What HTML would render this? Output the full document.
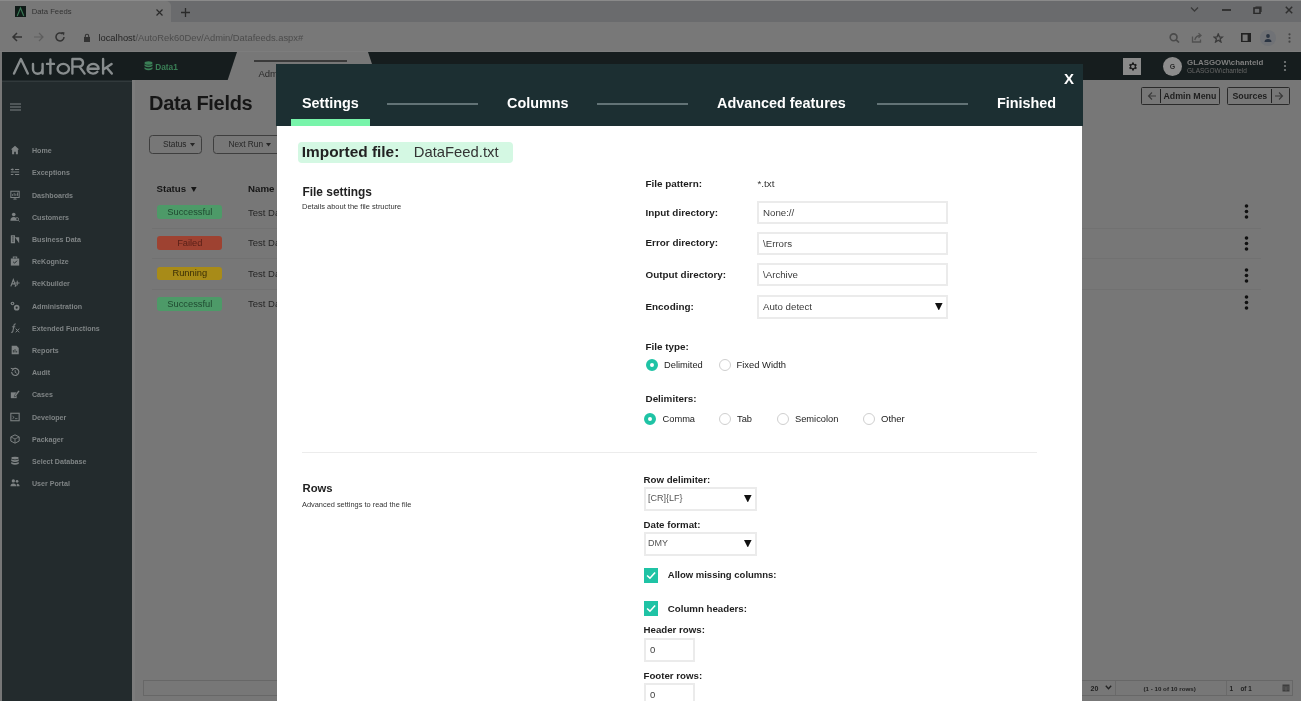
<!DOCTYPE html>
<html><head><meta charset="utf-8">
<style>
*{box-sizing:border-box;margin:0;padding:0}
html,body{width:1301px;height:701px;overflow:hidden;background:#777777;font-family:"Liberation Sans",sans-serif;position:relative}
.a{position:absolute;white-space:nowrap}
/* browser chrome */
#tabstrip{left:0;top:0;width:1301px;height:22px;background:#6a6b6d;border-top:1px solid #8a8a8a}
#tab{left:0;top:1px;width:171px;height:21px;background:#787878;border-radius:0 5px 0 0}
#toolbar{left:0;top:22px;width:1301px;height:30px;background:#787878}
/* app header */
#hdr{left:2px;top:52px;width:1299px;height:28px;background:#161d1e}
#side{left:2px;top:80px;width:129.5px;height:621px;background:#232b2d}
.sb{position:absolute;left:32px;font-size:8px;color:#7f8485;font-weight:bold;white-space:nowrap}
.sbi{position:absolute;left:9px;width:12px;height:12px}
/* modal */
#modal{left:277px;top:64px;width:805px;height:640px;background:#fff}
#mh{left:-1px;top:0;width:807px;height:62px;background:#1c2f32}
.tabt{position:absolute;top:28.5px;font-size:14.4px;font-weight:bold;color:#fff;white-space:nowrap;line-height:20px}
.tline{position:absolute;top:39px;height:2px;background:#627376}
.lbl{position:absolute;font-size:10px;font-weight:bold;color:#1e1e1e;white-space:nowrap;line-height:12px}
.inp{position:absolute;border:2px solid #ebebeb;background:#fff;font-size:9.7px;color:#3c3c3c;line-height:19px;padding-left:4px;white-space:nowrap}
.rad{position:absolute;width:12px;height:12px;border-radius:50%;border:1px solid #cfcfcf;background:#fff}
.rad.on{border:4.2px solid #1fc3a5}
.rt{position:absolute;font-size:10px;color:#222;white-space:nowrap;line-height:12px}
.chk{position:absolute;width:14.4px;height:14.8px;background:#1fc3a5}
</style></head><body><div id="root" style="position:absolute;left:0;top:0;width:1301px;height:701px;overflow:hidden;will-change:transform">
<div id="tabstrip" class="a"></div>
<div id="tab" class="a"></div>
<div id="toolbar" class="a"></div>

<!-- favicon -->
<div class="a" style="left:15px;top:6px;width:11px;height:11px;background:#0f1a17"><svg width="11" height="11" viewBox="0 0 11 11" style="display:block"><path d="M2.2 10 L5.5 2 L8.8 10" fill="none" stroke="#3a7a56" stroke-width="1.1"/></svg></div>
<div class="a" style="left:31.8px;top:5.5px;font-size:7.7px;color:#333;line-height:12px">Data Feeds</div>
<svg class="a" style="left:155px;top:7.5px" width="9" height="9" viewBox="0 0 9 9"><path d="M1.5 1.5 L7.5 7.5 M7.5 1.5 L1.5 7.5" stroke="#2a2a2a" stroke-width="1.2"/></svg>
<svg class="a" style="left:179.5px;top:6.5px" width="11" height="11" viewBox="0 0 11 11"><path d="M5.5 1 V10 M1 5.5 H10" stroke="#2a2a2a" stroke-width="1.3"/></svg>
<!-- window controls -->
<svg class="a" style="left:1190px;top:6px" width="9" height="7" viewBox="0 0 9 7"><path d="M1 1.5 L4.5 5 L8 1.5" fill="none" stroke="#3a3a3a" stroke-width="1.3"/></svg>
<div class="a" style="left:1222px;top:9px;width:8.7px;height:1.6px;background:#333"></div>
<svg class="a" style="left:1252.5px;top:5.5px" width="9" height="8.5" viewBox="0 0 9 8.5"><rect x="1" y="2" width="6" height="5.5" fill="none" stroke="#2a2a2a" stroke-width="1.6"/><path d="M2.5 1 H8 V6" fill="none" stroke="#2a2a2a" stroke-width="1.2"/></svg>
<svg class="a" style="left:1284.5px;top:5.5px" width="8" height="8" viewBox="0 0 8 8"><path d="M0.8 0.8 L7.2 7.2 M7.2 0.8 L0.8 7.2" stroke="#2e2e2e" stroke-width="1.5"/></svg>
<!-- nav -->
<svg class="a" style="left:10.5px;top:31px" width="12" height="12" viewBox="0 0 12 12"><path d="M11 6 H2 M6 2 L2 6 L6 10" fill="none" stroke="#333" stroke-width="1.5"/></svg>
<svg class="a" style="left:32.5px;top:31px" width="12" height="12" viewBox="0 0 12 12"><path d="M1 6 H10 M6 2 L10 6 L6 10" fill="none" stroke="#5e5e5e" stroke-width="1.2"/></svg>
<svg class="a" style="left:54px;top:31px" width="12" height="12" viewBox="0 0 12 12"><path d="M10 6 A4 4 0 1 1 8.5 2.8" fill="none" stroke="#333" stroke-width="1.5"/><path d="M7 1 L10.5 1.2 L10 4.5 Z" fill="#333"/></svg>
<svg class="a" style="left:83px;top:32.5px" width="8" height="9" viewBox="0 0 8 9"><rect x="1" y="4" width="6" height="5" fill="#333"/><path d="M2.3 4.5 V3 A1.7 1.7 0 0 1 5.7 3 V4.5" fill="none" stroke="#333" stroke-width="1.1"/></svg>
<div class="a" style="left:98.4px;top:31.5px;font-size:9.4px;color:#4c4c4c;line-height:12px"><span style="color:#262626">localhost</span>/AutoRek60Dev/Admin/Datafeeds.aspx#</div>
<!-- right toolbar icons -->
<svg class="a" style="left:1169px;top:32.5px" width="11" height="10" viewBox="0 0 11 10"><circle cx="4.6" cy="4.3" r="3.4" fill="none" stroke="#4a4a4a" stroke-width="1.6"/><path d="M7.2 6.8 L10 9.5" stroke="#4a4a4a" stroke-width="1.7"/></svg>
<svg class="a" style="left:1191px;top:32px" width="12" height="11" viewBox="0 0 12 11"><path d="M1.5 4.5 V10 H9.5 V7.5" fill="none" stroke="#505050" stroke-width="1.3"/><path d="M3.8 8 Q4.8 3.5 9.5 3.5 M7.5 1.3 L10 3.5 L7.5 5.7" fill="none" stroke="#505050" stroke-width="1.3"/></svg>
<svg class="a" style="left:1213px;top:32.5px" width="10.5" height="10" viewBox="0 0 13 13"><path d="M6.5 1.2 L8 5 L12 5.2 L8.9 7.7 L10 11.7 L6.5 9.4 L3 11.7 L4.1 7.7 L1 5.2 L5 5 Z" fill="none" stroke="#3a3a3a" stroke-width="1.7"/></svg>
<svg class="a" style="left:1240.5px;top:32.5px" width="10" height="9.5" viewBox="0 0 10 9.5"><rect x="0.8" y="0.8" width="8.4" height="7.9" fill="none" stroke="#222" stroke-width="1.6"/><rect x="6.6" y="0.8" width="2.6" height="7.9" fill="#222"/></svg>
<div class="a" style="left:1259.5px;top:29.5px;width:16px;height:16px;border-radius:50%;background:#707276"></div>
<svg class="a" style="left:1262.5px;top:32.5px" width="10" height="10" viewBox="0 0 10 10"><circle cx="5" cy="3" r="1.9" fill="#2a3442"/><path d="M1.5 9 Q1.5 6 5 6 Q8.5 6 8.5 9 Z" fill="#2a3442"/></svg>
<svg class="a" style="left:1286.5px;top:33px" width="5" height="10" viewBox="0 0 5 10"><circle cx="2.5" cy="1.3" r="1.1" fill="#444"/><circle cx="2.5" cy="5" r="1.1" fill="#444"/><circle cx="2.5" cy="8.7" r="1.1" fill="#444"/></svg>
<div class="a" style="left:0;top:51px;width:1301px;height:1px;background:#7d7d7d"></div>
<div class="a" style="left:2px;top:52px;width:1299px;height:28px;background:#777"></div>
<svg class="a" style="left:2px;top:52px" width="1299" height="28" viewBox="0 0 1299 28"><path d="M0 0 H235 L225.7 28 H0 Z" fill="#161d1e"/><path d="M366 0 H1299 V28 H375.3 Z" fill="#161d1e"/></svg>
<div class="a" style="left:254px;top:60px;width:93px;height:2px;background:#3a3a3a"></div>
<div class="a" style="left:258.5px;top:67.5px;font-size:9.5px;color:#2a2a2a;line-height:12px">Admin</div>
<!-- logo -->
<svg class="a" style="left:10px;top:54px" width="105" height="26" viewBox="0 0 105 26"><g fill="none" stroke="#888d8e" stroke-width="2.4" stroke-linecap="round" stroke-linejoin="round">
<path d="M4 19.6 L10.9 5 L17.8 19.6"/>
<path d="M23 9.9 V15.3 A4.6 4.4 0 0 0 32.4 15.3 M32.6 9.9 V19.6"/>
<path d="M40.4 5.4 V19.6 M37 9.9 H44"/>
<ellipse cx="53.3" cy="14.75" rx="5.7" ry="4.85"/>
<path d="M62.4 19.6 V5 H70 A3.9 3.9 0 0 1 70 12.6 H62.4 M69.5 12.6 L74.6 19.6"/>
<path d="M77.6 14.7 H88.6 A5.5 4.85 0 1 0 87.4 17.8"/>
<path d="M93.1 5 V19.6 M93.4 15.6 L101.6 9.9 M96.6 13.4 L101.8 19.6"/>
</g></svg>
<!-- Data1 -->
<svg class="a" style="left:143.5px;top:61px" width="9" height="10" viewBox="0 0 9 10"><ellipse cx="4.5" cy="2" rx="4" ry="1.8" fill="#3a7f56"/><path d="M0.5 3.2 V5 Q4.5 7.5 8.5 5 V3.2 Q4.5 5.6 0.5 3.2Z M0.5 6.2 V8 Q4.5 10.5 8.5 8 V6.2 Q4.5 8.6 0.5 6.2Z" fill="#3a7f56"/></svg>
<div class="a" style="left:155.2px;top:60.5px;font-size:8.3px;font-weight:bold;color:#3a7f56;line-height:12px">Data1</div>
<!-- gear -->
<div class="a" style="left:1123px;top:57.5px;width:18px;height:17.5px;background:#8a8a8a"></div>
<svg class="a" style="left:1126.5px;top:60.5px" width="11" height="11" viewBox="0 0 24 24"><path fill="#1b1b1b" d="M19.4 13a7.5 7.5 0 0 0 0-2l2.1-1.6-2-3.5-2.5 1a7.6 7.6 0 0 0-1.7-1L15 3.2h-4l-.4 2.7a7.6 7.6 0 0 0-1.7 1l-2.5-1-2 3.5L6.6 11a7.5 7.5 0 0 0 0 2l-2.1 1.6 2 3.5 2.5-1a7.6 7.6 0 0 0 1.7 1l.4 2.7h4l.4-2.7a7.6 7.6 0 0 0 1.7-1l2.5 1 2-3.5zM13 16a4 4 0 1 1 0-8 4 4 0 0 1 0 8z"/></svg>
<!-- avatar -->
<div class="a" style="left:1163.3px;top:57.3px;width:19px;height:19px;border-radius:50%;background:#8c8c8c"></div>
<div class="a" style="left:1169.8px;top:61.8px;font-size:7px;font-weight:bold;color:#2a2a2a;line-height:10px">G</div>
<div class="a" style="left:1187px;top:57.5px;font-size:7.9px;font-weight:bold;color:#7f7f7f;line-height:10px">GLASGOW\chanteld</div>
<div class="a" style="left:1187px;top:67px;font-size:6.5px;color:#676767;line-height:8px">GLASGOW\chanteld</div>
<svg class="a" style="left:1283px;top:59.5px" width="4" height="12" viewBox="0 0 4 12"><circle cx="2" cy="2" r="1.1" fill="#7c8080"/><circle cx="2" cy="6" r="1.1" fill="#7c8080"/><circle cx="2" cy="10" r="1.1" fill="#7c8080"/></svg>

<div id="side" class="a"></div>
<div class="a" style="left:131.5px;top:80px;width:3.5px;height:621px;background:#7c7c7c"></div>
<div class="a" style="left:2px;top:81px;width:129.5px;height:1px;background:#323a3c"></div>
<svg class="a" style="left:10px;top:102.5px" width="11" height="8" viewBox="0 0 11 8"><path d="M0 1 H11 M0 4 H11 M0 7 H11" stroke="#7d8283" stroke-width="1.2"/></svg>
<svg class="a" style="left:10px;top:145.0px" width="10" height="10" viewBox="0 0 12 12"><path d="M6 1 L11 5.5 H9.5 V11 H7 V8 H5 V11 H2.5 V5.5 H1 Z" fill="#7d8283"/></svg>
<div class="sb" style="top:145.8px;line-height:10px;font-size:7.1px">Home</div>
<svg class="a" style="left:10px;top:167.0px" width="10" height="10" viewBox="0 0 12 12"><path d="M1 3 H4 M6 3 H11 M1 6 H11 M1 9 H4 M6 9 H11" stroke="#7d8283" stroke-width="1.2"/><circle cx="3" cy="3" r="1.3" fill="#7d8283"/></svg>
<div class="sb" style="top:167.8px;line-height:10px;font-size:7.1px">Exceptions</div>
<svg class="a" style="left:10px;top:190.0px" width="10" height="10" viewBox="0 0 12 12"><rect x="1" y="1.5" width="10" height="7.5" fill="none" stroke="#7d8283" stroke-width="1.2"/><path d="M3 7 V5 M5 7 V3.5 M7 7 V4.5 M9 7 V3" stroke="#7d8283"/><path d="M4 11 H8 M6 9 V11" stroke="#7d8283"/></svg>
<div class="sb" style="top:190.8px;line-height:10px;font-size:7.1px">Dashboards</div>
<svg class="a" style="left:10px;top:212.0px" width="10" height="10" viewBox="0 0 12 12"><circle cx="4.5" cy="3" r="2.2" fill="#7d8283"/><path d="M0.5 10.5 Q0.5 6 4.5 6 Q6.5 6 7.5 7.5 V10.5 Z" fill="#7d8283"/><circle cx="8.5" cy="8.5" r="1.8" fill="none" stroke="#7d8283" stroke-width="1"/><path d="M9.8 9.8 L11.5 11.5" stroke="#7d8283" stroke-width="1"/></svg>
<div class="sb" style="top:212.8px;line-height:10px;font-size:7.1px">Customers</div>
<svg class="a" style="left:10px;top:234.0px" width="10" height="10" viewBox="0 0 12 12"><path d="M1 11 V1.5 H6 V11 M6 4 H11 V11 Z" fill="#7d8283"/><path d="M2.5 3.5 H4.5 M2.5 6 H4.5 M2.5 8.5 H4.5" stroke="#232b2d" stroke-width="1"/></svg>
<div class="sb" style="top:234.8px;line-height:10px;font-size:7.1px">Business Data</div>
<svg class="a" style="left:10px;top:256.0px" width="10" height="10" viewBox="0 0 12 12"><rect x="1" y="3" width="10" height="8.5" fill="#7d8283"/><path d="M4 3 V1.2 H8 V3" fill="none" stroke="#7d8283" stroke-width="1.3"/><path d="M3.8 7 L5.5 8.6 L8.4 5.6" fill="none" stroke="#232b2d" stroke-width="1.2"/></svg>
<div class="sb" style="top:256.8px;line-height:10px;font-size:7.1px">ReKognize</div>
<svg class="a" style="left:10px;top:278.0px" width="10" height="10" viewBox="0 0 12 12"><path d="M1 10 L4 2 L7 10 M2.2 7 H5.8" fill="none" stroke="#7d8283" stroke-width="1.4"/><path d="M6 6 H11.5 M8.7 3.2 V8.8 M6 10.5 L8 8" stroke="#7d8283" stroke-width="1.2"/></svg>
<div class="sb" style="top:278.8px;line-height:10px;font-size:7.1px">ReKbuilder</div>
<svg class="a" style="left:10px;top:301.0px" width="10" height="10" viewBox="0 0 12 12"><circle cx="3" cy="3" r="2.2" fill="#7d8283"/><circle cx="3" cy="3" r="0.8" fill="#232b2d"/><circle cx="8" cy="8" r="3.4" fill="#7d8283"/><circle cx="8" cy="8" r="1.3" fill="#232b2d"/></svg>
<div class="sb" style="top:301.8px;line-height:10px;font-size:7.1px">Administration</div>
<svg class="a" style="left:10px;top:323.0px" width="10" height="10" viewBox="0 0 12 12"><path d="M7 1.2 Q5.2 0.8 4.8 2.8 L3.4 10 Q3 11.6 1.3 11" fill="none" stroke="#7d8283" stroke-width="1.3"/><path d="M2.3 4.6 H6.3" stroke="#7d8283" stroke-width="1.1"/><path d="M6.8 6.8 L11 11.2 M11 6.8 L6.8 11.2" stroke="#7d8283" stroke-width="1.2"/></svg>
<div class="sb" style="top:323.8px;line-height:10px;font-size:7.1px">Extended Functions</div>
<svg class="a" style="left:10px;top:345.0px" width="10" height="10" viewBox="0 0 12 12"><path d="M2 1 H8 L10.5 3.5 V11 H2 Z" fill="#7d8283"/><path d="M4 6 V9 M6 5 V9 M8 7 V9" stroke="#232b2d" stroke-width="1"/></svg>
<div class="sb" style="top:345.8px;line-height:10px;font-size:7.1px">Reports</div>
<svg class="a" style="left:10px;top:367.0px" width="10" height="10" viewBox="0 0 12 12"><path d="M2 6 A4.3 4.3 0 1 0 3.3 2.8" fill="none" stroke="#7d8283" stroke-width="1.4"/><path d="M1 1.5 L3.8 2.4 L2.4 5" fill="none" stroke="#7d8283" stroke-width="1.2"/><path d="M6.2 3.8 V6.3 L8 7.5" fill="none" stroke="#7d8283" stroke-width="1.2"/></svg>
<div class="sb" style="top:367.8px;line-height:10px;font-size:7.1px">Audit</div>
<svg class="a" style="left:10px;top:389.0px" width="10" height="10" viewBox="0 0 12 12"><path d="M1 4 H8 V11 H1 Z" fill="#7d8283"/><path d="M5.5 7.5 L10 1.5 L11.8 2.8 L7.3 8.8 L5.2 9.5 Z" fill="#7d8283" stroke="#232b2d" stroke-width="0.6"/></svg>
<div class="sb" style="top:389.8px;line-height:10px;font-size:7.1px">Cases</div>
<svg class="a" style="left:10px;top:412.0px" width="10" height="10" viewBox="0 0 12 12"><rect x="1" y="1.5" width="10" height="9" fill="none" stroke="#7d8283" stroke-width="1.3"/><path d="M3 5 L5 6.5 L3 8 M6 8 H9" fill="none" stroke="#7d8283" stroke-width="1"/></svg>
<div class="sb" style="top:412.8px;line-height:10px;font-size:7.1px">Developer</div>
<svg class="a" style="left:10px;top:434.0px" width="10" height="10" viewBox="0 0 12 12"><path d="M6 1 L11 3.5 V8.5 L6 11 L1 8.5 V3.5 Z" fill="none" stroke="#7d8283" stroke-width="1.2"/><path d="M1 3.5 L6 6 L11 3.5 M6 6 V11" fill="none" stroke="#7d8283" stroke-width="1"/></svg>
<div class="sb" style="top:434.8px;line-height:10px;font-size:7.1px">Packager</div>
<svg class="a" style="left:10px;top:456.0px" width="10" height="10" viewBox="0 0 12 12"><ellipse cx="6" cy="2.5" rx="4.5" ry="1.7" fill="#7d8283"/><path d="M1.5 4 V6 Q6 8.3 10.5 6 V4 Q6 6.3 1.5 4 Z M1.5 7.2 V9.4 Q6 11.7 10.5 9.4 V7.2 Q6 9.5 1.5 7.2Z" fill="#7d8283"/></svg>
<div class="sb" style="top:456.8px;line-height:10px;font-size:7.1px">Select Database</div>
<svg class="a" style="left:10px;top:478.0px" width="10" height="10" viewBox="0 0 12 12"><circle cx="4" cy="3.5" r="2" fill="#7d8283"/><circle cx="8.5" cy="4" r="1.6" fill="#7d8283"/><path d="M0.5 10 Q0.5 6.5 4 6.5 Q7.5 6.5 7.5 10 Z M8 10 Q8 7 8.5 6.8 Q11.5 6.8 11.5 10 Z" fill="#7d8283"/></svg>
<div class="sb" style="top:478.8px;line-height:10px;font-size:7.1px">User Portal</div>



<!-- content -->
<div class="a" style="left:149px;top:91.8px;font-size:20px;font-weight:bold;color:#161616;line-height:22px;letter-spacing:-0.3px">Data Fields</div>
<div class="a" style="left:148.5px;top:135px;width:53px;height:19px;border:1px solid #3e3e3e;border-radius:3.5px"></div>
<div class="a" style="left:163px;top:139px;font-size:8.3px;color:#262626;line-height:11px">Status</div>
<svg class="a" style="left:190px;top:142.5px" width="5" height="4" viewBox="0 0 5 4"><path d="M0 0 H5 L2.5 3.5Z" fill="#262626"/></svg>
<div class="a" style="left:213px;top:135px;width:70px;height:19px;border:1px solid #3e3e3e;border-radius:3.5px"></div>
<div class="a" style="left:228.5px;top:139px;font-size:8.3px;color:#262626;line-height:11px">Next Run</div>
<svg class="a" style="left:265.5px;top:142.5px" width="5" height="4" viewBox="0 0 5 4"><path d="M0 0 H5 L2.5 3.5Z" fill="#262626"/></svg>

<div class="a" style="left:156.5px;top:183px;font-size:9.7px;font-weight:bold;color:#161616;line-height:12px">Status</div>
<svg class="a" style="left:191.2px;top:186.5px" width="5.6" height="5" viewBox="0 0 5.6 5"><path d="M0 0 H5.6 L2.8 5Z" fill="#161616"/></svg>
<div class="a" style="left:248px;top:183px;font-size:9.7px;font-weight:bold;color:#161616;line-height:12px">Name</div>

<div class="a" style="left:157.3px;top:205.3px;width:65px;height:13.5px;border-radius:3px;background:#4d9a68"></div>
<div class="a" style="left:157.3px;top:205.8px;width:65px;text-align:center;font-size:9.3px;color:#1f4a30;line-height:13px">Successful</div>
<div class="a" style="left:157.3px;top:236.4px;width:65px;height:13.5px;border-radius:3px;background:#9e4231"></div>
<div class="a" style="left:157.3px;top:236.9px;width:65px;text-align:center;font-size:9.3px;color:#5a2018;line-height:13px">Failed</div>
<div class="a" style="left:157.3px;top:266.8px;width:65px;height:13.5px;border-radius:3px;background:#a88b18"></div>
<div class="a" style="left:157.3px;top:267.3px;width:65px;text-align:center;font-size:9.3px;color:#3a2e06;line-height:13px">Running</div>
<div class="a" style="left:157.3px;top:297.4px;width:65px;height:13.5px;border-radius:3px;background:#4d9a68"></div>
<div class="a" style="left:157.3px;top:297.9px;width:65px;text-align:center;font-size:9.3px;color:#1f4a30;line-height:13px">Successful</div>

<div class="a" style="left:248px;top:206.5px;font-size:9.5px;color:#262626;line-height:12px">Test Da</div>
<div class="a" style="left:248px;top:237px;font-size:9.5px;color:#262626;line-height:12px">Test Da</div>
<div class="a" style="left:248px;top:267.5px;font-size:9.5px;color:#262626;line-height:12px">Test Da</div>
<div class="a" style="left:248px;top:298px;font-size:9.5px;color:#262626;line-height:12px">Test Da</div>

<div class="a" style="left:152px;top:228px;width:1109px;height:1px;background:#717171"></div>
<div class="a" style="left:152px;top:257.5px;width:1109px;height:1px;background:#717171"></div>
<div class="a" style="left:152px;top:288.5px;width:1109px;height:1px;background:#717171"></div>

<svg class="a" style="left:1243.5px;top:204px" width="5" height="15" viewBox="0 0 5 15"><circle cx="2.5" cy="2" r="1.8" fill="#111"/><circle cx="2.5" cy="7.5" r="1.8" fill="#111"/><circle cx="2.5" cy="13" r="1.8" fill="#111"/></svg>
<svg class="a" style="left:1243.5px;top:236px" width="5" height="15" viewBox="0 0 5 15"><circle cx="2.5" cy="2" r="1.8" fill="#111"/><circle cx="2.5" cy="7.5" r="1.8" fill="#111"/><circle cx="2.5" cy="13" r="1.8" fill="#111"/></svg>
<svg class="a" style="left:1243.5px;top:267.5px" width="5" height="15" viewBox="0 0 5 15"><circle cx="2.5" cy="2" r="1.8" fill="#111"/><circle cx="2.5" cy="7.5" r="1.8" fill="#111"/><circle cx="2.5" cy="13" r="1.8" fill="#111"/></svg>
<svg class="a" style="left:1243.5px;top:294.5px" width="5" height="15" viewBox="0 0 5 15"><circle cx="2.5" cy="2" r="1.8" fill="#111"/><circle cx="2.5" cy="7.5" r="1.8" fill="#111"/><circle cx="2.5" cy="13" r="1.8" fill="#111"/></svg>

<!-- admin menu / sources -->
<div class="a" style="left:1141px;top:87.3px;width:79px;height:17.5px;border:1px solid #2a2a2a;border-radius:1.5px"></div>
<svg class="a" style="left:1147px;top:91px" width="10" height="10" viewBox="0 0 10 10"><path d="M9 5 H1.5 M5 1.5 L1.5 5 L5 8.5" fill="none" stroke="#3a3a3a" stroke-width="1.1"/></svg>
<div class="a" style="left:1159.5px;top:89px;width:1.2px;height:14px;background:#222"></div>
<div class="a" style="left:1163.5px;top:89.5px;font-size:8.8px;font-weight:bold;color:#1e1e1e;line-height:12px">Admin Menu</div>
<div class="a" style="left:1226.5px;top:87.3px;width:63px;height:17.5px;border:1px solid #2a2a2a;border-radius:1.5px"></div>
<div class="a" style="left:1232.5px;top:89.5px;font-size:8.8px;font-weight:bold;color:#1e1e1e;line-height:12px">Sources</div>
<div class="a" style="left:1271px;top:89px;width:1.2px;height:14px;background:#222"></div>
<svg class="a" style="left:1274px;top:91px" width="10" height="10" viewBox="0 0 10 10"><path d="M1 5 H8.5 M5 1.5 L8.5 5 L5 8.5" fill="none" stroke="#3a3a3a" stroke-width="1.1"/></svg>

<!-- pager -->
<div class="a" style="left:143px;top:680px;width:1150px;height:16px;border:1px solid #676767;background:#777"></div>
<div class="a" style="left:1090.5px;top:683.5px;font-size:7px;font-weight:bold;color:#1e1e1e;line-height:9px">20</div>
<svg class="a" style="left:1105px;top:685px" width="7" height="5" viewBox="0 0 7 5"><path d="M0.8 0.8 L3.5 3.8 L6.2 0.8" fill="none" stroke="#222" stroke-width="1.3"/></svg>
<div class="a" style="left:1114.5px;top:681px;width:1px;height:14px;background:#6a6a6a"></div>
<div class="a" style="left:1143.5px;top:683.5px;font-size:6.2px;font-weight:bold;color:#222;line-height:9px">(1 - 10 of 10 rows)</div>
<div class="a" style="left:1226px;top:681px;width:1px;height:14px;background:#6a6a6a"></div>
<div class="a" style="left:1229.5px;top:683.5px;font-size:6.5px;font-weight:bold;color:#222;line-height:9px">1</div>
<div class="a" style="left:1240.5px;top:683.5px;font-size:6.3px;font-weight:bold;color:#222;line-height:9px">of 1</div>
<svg class="a" style="left:1281.5px;top:683.5px" width="8" height="8" viewBox="0 0 8 8"><rect x="0.5" y="0.5" width="7" height="7" fill="#3e3e3e"/><path d="M1 3 H7 M1 5 H7 M4 3 V7" stroke="#666" stroke-width="0.7"/></svg>

<div id="modal" class="a">
  <div id="mh" class="a">
    <div class="a" style="left:15px;top:55px;width:79px;height:7px;background:#78f4aa"></div>
    <div class="tabt" style="left:26px">Settings</div>
    <div class="tline" style="left:111px;width:91px"></div>
    <div class="tabt" style="left:231px">Columns</div>
    <div class="tline" style="left:321px;width:91px"></div>
    <div class="tabt" style="left:441px">Advanced features</div>
    <div class="tline" style="left:601px;width:91px"></div>
    <div class="tabt" style="left:721px">Finished</div>
    <div class="a" style="left:788px;top:6px;font-size:15px;font-weight:bold;color:#fff">X</div>
  </div>

  <div class="a" style="left:21px;top:77.5px;width:215px;height:21px;background:#d4f8e3;border-radius:4px"></div>
  <div class="a" style="left:24.8px;top:78.5px;font-size:15.4px;font-weight:bold;color:#222;line-height:18px">Imported file:</div>
  <div class="a" style="left:136.8px;top:78.5px;font-size:14.8px;color:#333;line-height:18px">DataFeed.txt</div>
  <div class="a" style="left:25.5px;top:120.5px;font-size:11.9px;font-weight:bold;color:#222;line-height:14px">File settings</div>
  <div class="a" style="left:25px;top:138px;font-size:7.5px;color:#333;line-height:9px">Details about the file structure</div>

  <div class="lbl" style="left:368.5px;top:114px;font-size:9.9px">File pattern:</div>
  <div class="rt" style="left:480.5px;top:114px;font-size:9.9px;color:#333">*.txt</div>
  <div class="lbl" style="left:368.5px;top:142.5px;font-size:9.9px">Input directory:</div>
  <div class="inp" style="left:480px;top:136.5px;width:191px;height:23.5px">None://</div>
  <div class="lbl" style="left:368.5px;top:173px;font-size:9.9px">Error directory:</div>
  <div class="inp" style="left:480px;top:167.5px;width:191px;height:23px">\Errors</div>
  <div class="lbl" style="left:368.5px;top:204.5px;font-size:9.9px">Output directory:</div>
  <div class="inp" style="left:480px;top:198.5px;width:191px;height:23px">\Archive</div>
  <div class="lbl" style="left:368.5px;top:236.5px;font-size:9.9px">Encoding:</div>
  <div class="inp" style="left:480px;top:231px;width:191px;height:23.5px">Auto detect</div>
  <svg class="a" style="left:658.4px;top:238.8px" width="7.6" height="7.5" viewBox="0 0 7.6 7.5"><path d="M0 0 H7.6 L3.8 7.5Z" fill="#111"/></svg>

  <div class="lbl" style="left:368.5px;top:277px;font-size:9.9px">File type:</div>
  <div class="rad on" style="left:369px;top:294.8px"></div>
  <div class="rt" style="left:387px;top:295px;font-size:9.3px">Delimited</div>
  <div class="rad" style="left:441.6px;top:294.8px"></div>
  <div class="rt" style="left:459.5px;top:295px;font-size:9.4px">Fixed Width</div>

  <div class="lbl" style="left:368.5px;top:328.5px;font-size:9.9px">Delimiters:</div>
  <div class="rad on" style="left:367.3px;top:349.3px"></div>
  <div class="rt" style="left:385.5px;top:348.8px;font-size:9.3px">Comma</div>
  <div class="rad" style="left:441.6px;top:349.3px"></div>
  <div class="rt" style="left:460px;top:348.8px;font-size:9.3px">Tab</div>
  <div class="rad" style="left:499.7px;top:349.3px"></div>
  <div class="rt" style="left:518px;top:348.8px;font-size:9.3px">Semicolon</div>
  <div class="rad" style="left:586.2px;top:349.3px"></div>
  <div class="rt" style="left:604px;top:348.8px;font-size:9.5px">Other</div>

  <div class="a" style="left:25px;top:388px;width:735px;height:1px;background:#ececec"></div>

  <div class="a" style="left:25.5px;top:417px;font-size:11.3px;font-weight:bold;color:#222;line-height:14px">Rows</div>
  <div class="a" style="left:25px;top:435.5px;font-size:7.4px;color:#333;line-height:9px">Advanced settings to read the file</div>

  <div class="lbl" style="left:366.5px;top:409.5px;font-size:9.7px">Row delimiter:</div>
  <div class="inp" style="left:366.5px;top:422.5px;width:113.5px;height:24px;font-size:9px;padding-left:2.5px;color:#555">[CR]{LF}</div>
  <svg class="a" style="left:467.2px;top:430.8px" width="7.6" height="7.5" viewBox="0 0 7.6 7.5"><path d="M0 0 H7.6 L3.8 7.5Z" fill="#111"/></svg>
  <div class="lbl" style="left:366.5px;top:454.5px;font-size:9.7px">Date format:</div>
  <div class="inp" style="left:366.5px;top:467.5px;width:113.5px;height:24px;font-size:9px;padding-left:2.5px;color:#555">DMY</div>
  <svg class="a" style="left:467.2px;top:475.9px" width="7.6" height="7.5" viewBox="0 0 7.6 7.5"><path d="M0 0 H7.6 L3.8 7.5Z" fill="#111"/></svg>

  <div class="chk" style="left:366.7px;top:504.3px"><svg width="14.4" height="14.8" viewBox="0 0 15 15" style="display:block"><path d="M3.2 7.6 L6.2 10.4 L11.6 4.4" fill="none" stroke="#fff" stroke-width="1.6"/></svg></div>
  <div class="lbl" style="left:390.8px;top:505px;font-size:9.5px">Allow missing columns:</div>
  <div class="chk" style="left:366.7px;top:537px"><svg width="14.4" height="14.8" viewBox="0 0 15 15" style="display:block"><path d="M3.2 7.6 L6.2 10.4 L11.6 4.4" fill="none" stroke="#fff" stroke-width="1.6"/></svg></div>
  <div class="lbl" style="left:390.8px;top:538.5px;font-size:9.7px">Column headers:</div>
  <div class="lbl" style="left:366.5px;top:560px;font-size:9.7px">Header rows:</div>
  <div class="inp" style="left:366.5px;top:573.5px;width:51px;height:24px;font-size:9.5px;padding-left:4.5px">0</div>
  <div class="lbl" style="left:366.5px;top:605.5px;font-size:9.7px">Footer rows:</div>
  <div class="inp" style="left:366.5px;top:618.5px;width:51px;height:24px;font-size:9.5px;padding-left:4.5px">0</div>
</div>
</div></body></html>
